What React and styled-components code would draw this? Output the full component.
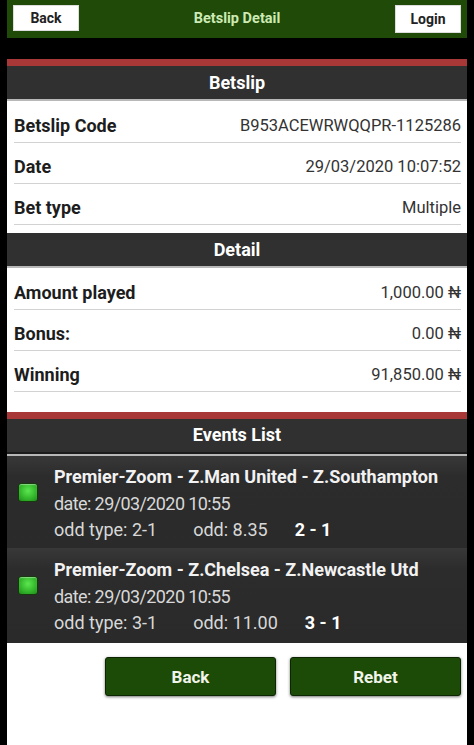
import React from "react";
import styled, { createGlobalStyle } from "styled-components";

const GlobalStyle = createGlobalStyle`
  html, body {
    margin: 0;
    padding: 0;
    background: #000;
    font-family: Roboto, "Liberation Sans", sans-serif;
  }
`;

const Page = styled.div`
  width: 460px;
  margin: 0 7px;
  min-height: 745px;
  display: flex;
  flex-direction: column;
`;

const TopBar = styled.div`
  height: 38px;
  background: #1f4a08;
  display: flex;
  align-items: center;
  justify-content: space-between;
  padding: 0 6px;
  box-sizing: border-box;
`;

const TopButton = styled.button`
  width: 66px;
  height: ${(p) => p.$h || 26}px;
  margin-top: ${(p) => (p.$h ? 0 : -2)}px;
  background: #fff;
  border: 1px solid #ddd;
  font-family: inherit;
  font-weight: 700;
  font-size: 14px;
  color: #222;
  padding: 0;
`;

const TopTitle = styled.div`
  color: #cdeab4;
  font-weight: 700;
  font-size: 14.5px;
  margin-top: -2px;
`;

const Section = styled.div`
  margin-top: ${(p) => p.$gap || 0}px;
  border-top: ${(p) => (p.$red ? "7px solid #a83838" : "none")};
`;

const SectionHead = styled.div`
  height: ${(p) => (p.$dark ? 35 : 33)}px;
  box-sizing: content-box;
  background: #303030;
  color: #fff;
  font-weight: 700;
  font-size: 18px;
  display: flex;
  align-items: center;
  justify-content: center;
  padding-bottom: ${(p) => (p.$dark ? 0 : 0)}px;
  border-bottom: 2px solid #b8b8b8;
  box-shadow: inset 0 ${(p) => (p.$dark ? "-2px" : "0")} 0 #1c1c1c;
  line-height: ${(p) => (p.$dark ? "31px" : "normal")};
  align-items: ${(p) => (p.$dark ? "flex-start" : "center")};
`;

const Panel = styled.div`
  background: #fff;
  padding: 1px 6px ${(p) => p.$pb || 8}px 7px;
`;

const Row = styled.div`
  height: 41px;
  box-sizing: border-box;
  padding-top: 7px;
  display: flex;
  align-items: center;
  justify-content: space-between;
  border-bottom: 1px solid #d2d2d2;
  color: #222;
`;

const Label = styled.span`
  font-weight: 700;
  font-size: 18px;
  color: #1d1d1d;
`;

const Value = styled.span`
  font-size: 16.5px;
  color: #333;
`;

const Events = styled.div`
  background: #262626;
`;

const Event = styled.div`
  height: ${(p) => p.$h}px;
  box-sizing: border-box;
  display: flex;
  align-items: flex-start;
  padding: ${(p) => p.$pt}px 0 0 11px;
  background: linear-gradient(#383838, #2c2c2c 22%, #2a2a2a);
`;

const Check = styled.div`
  width: 18px;
  height: 17px;
  margin-top: 19px;
  border-radius: 3px;
  border: 1px solid #163a0e;
  background: radial-gradient(circle at 50% 40%, #5ce650, #32b52a 60%, #1f8a1c);
  box-shadow: inset 0 1px 1px rgba(255, 255, 255, 0.4);
  flex-shrink: 0;
`;

const EventBody = styled.div`
  margin-left: 16px;
  display: flex;
  flex-direction: column;
`;

const EventTitle = styled.div`
  color: #f2f2f2;
  font-weight: 700;
  font-size: 18px;
  line-height: 26.5px;
`;

const EventLine = styled.div`
  color: #d8d8d8;
  font-size: 18px;
  line-height: 26.5px;
  letter-spacing: ${(p) => p.$ls || 0}px;
  display: flex;
`;

const Odd = styled.span`
  margin-right: ${(p) => p.$gap}px;
`;

const Score = styled.span`
  color: #fff;
  font-weight: 700;
`;

const Footer = styled.div`
  flex: 1;
  background: #fff;
  display: flex;
  justify-content: flex-end;
  align-items: flex-start;
  gap: 14px;
  padding: 14px 6px 0 0;
`;

const ActionButton = styled.button`
  width: 171px;
  height: 39px;
  background: #1c4b07;
  border: 1px solid #0c2603;
  border-radius: 3px;
  box-shadow: 0 1px 3px rgba(0, 0, 0, 0.55);
  color: #f0f4ea;
  font-family: inherit;
  font-weight: 700;
  font-size: 17px;
`;

const betslip = [
  ["Betslip Code", "B953ACEWRWQQPR-1125286"],
  ["Date", "29/03/2020 10:07:52"],
  ["Bet type", "Multiple"],
];

const detail = [
  ["Amount played", "1,000.00 ₦"],
  ["Bonus:", "0.00 ₦"],
  ["Winning", "91,850.00 ₦"],
];

const events = [
  {
    title: "Premier-Zoom - Z.Man United - Z.Southampton",
    date: "29/03/2020 10:55",
    type: "2-1",
    odd: "8.35",
    score: "2 - 1",
    h: 92,
    pt: 8,
  },
  {
    title: "Premier-Zoom - Z.Chelsea - Z.Newcastle Utd",
    date: "29/03/2020 10:55",
    type: "3-1",
    odd: "11.00",
    score: "3 - 1",
    h: 95,
    pt: 9,
  },
];

export default function App() {
  return (
    <>
      <GlobalStyle />
      <Page>
        <TopBar>
          <TopButton>Back</TopButton>
          <TopTitle>Betslip Detail</TopTitle>
          <TopButton $h={28}>Login</TopButton>
        </TopBar>

        <Section $gap={21} $red>
          <SectionHead>Betslip</SectionHead>
          <Panel>
            {betslip.map(([k, v]) => (
              <Row key={k}>
                <Label>{k}</Label>
                <Value>{v}</Value>
              </Row>
            ))}
          </Panel>
          <SectionHead>Detail</SectionHead>
          <Panel $pb={20}>
            {detail.map(([k, v]) => (
              <Row key={k}>
                <Label>{k}</Label>
                <Value>{v}</Value>
              </Row>
            ))}
          </Panel>
        </Section>

        <Section $red>
          <SectionHead $dark>Events List</SectionHead>
          <Events>
            {events.map((e) => (
              <Event key={e.title} $h={e.h} $pt={e.pt}>
                <Check />
                <EventBody>
                  <EventTitle>{e.title}</EventTitle>
                  <EventLine $ls={-0.6}>date: {e.date}</EventLine>
                  <EventLine>
                    <Odd $gap={36}>odd type: {e.type}</Odd>
                    <Odd $gap={27}>odd: {e.odd}</Odd>
                    <Score>{e.score}</Score>
                  </EventLine>
                </EventBody>
              </Event>
            ))}
          </Events>
        </Section>

        <Footer>
          <ActionButton>Back</ActionButton>
          <ActionButton>Rebet</ActionButton>
        </Footer>
      </Page>
    </>
  );
}
